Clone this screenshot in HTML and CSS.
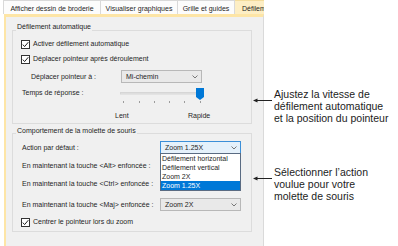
FILE: index.html
```html
<!DOCTYPE html>
<html lang="fr">
<head>
    <meta charset="UTF-8">
    <title>Défilement</title>
    <link rel="stylesheet" href="styles.css">
</head>
<body>
<div class="page">
    <div class="dialog">
        <div class="tabs">
            <div class="tab t1">Afficher dessin de broderie</div>
            <div class="tab t2">Visualiser graphiques</div>
            <div class="tab t3">Grille et guides</div>
            <div class="tab active">Défilem</div>
        </div>
        <div class="panel">
            <!-- auto scroll -->
            <div class="group g1">
                <div class="group-title">Défilement automatique</div>
                <div class="row check c-auto">
                    <svg class="box" width="9" height="9" viewBox="0 0 9 9"><rect x="0.5" y="0.5" width="8" height="8" fill="#fff" stroke="#333"/><path d="M1.8 4.6 L3.6 6.6 L7.3 2.2" fill="none" stroke="#222" stroke-width="1"/></svg>
                    <span>Activer défilement automatique</span>
                </div>
                <div class="row check c-move">
                    <svg class="box" width="9" height="9" viewBox="0 0 9 9"><rect x="0.5" y="0.5" width="8" height="8" fill="#fff" stroke="#333"/><path d="M1.8 4.6 L3.6 6.6 L7.3 2.2" fill="none" stroke="#222" stroke-width="1"/></svg>
                    <span>Déplacer pointeur après déroulement</span>
                </div>
                <div class="row r-target">
                    <label class="lbl">Déplacer pointeur à :</label>
                    <div class="combo">
                        <span>Mi-chemin</span>
                        <svg class="chev" width="6" height="4" viewBox="0 0 6 4"><polyline points="0.5,0.5 3,3 5.5,0.5" fill="none" stroke="#777"/></svg>
                    </div>
                </div>
                <div class="row r-speed">
                    <label class="lbl">Temps de réponse :</label>
                    <svg class="slider" width="88" height="17" viewBox="0 0 88 17">
                        <rect x="0.5" y="5.5" width="82" height="1.5" fill="#e7e7e7" stroke="#d6d6d6" stroke-width="1"/>
                        <g stroke="#9c9c9c" stroke-width="1">
                            <line x1="3.5" y1="14" x2="3.5" y2="16"/>
                            <line x1="19.5" y1="14" x2="19.5" y2="16"/>
                            <line x1="34.5" y1="14" x2="34.5" y2="16"/>
                            <line x1="49.5" y1="14" x2="49.5" y2="16"/>
                            <line x1="64.5" y1="14" x2="64.5" y2="16"/>
                            <line x1="80.5" y1="14" x2="80.5" y2="16"/>
                        </g>
                        <polygon points="76,1 84,1 84,10 80,13 76,10" fill="#0078d7"/>
                    </svg>
                </div>
                <div class="row r-scale">
                    <span class="lent">Lent</span>
                    <span>Rapide</span>
                </div>
            </div>

            <!-- mouse wheel -->
            <div class="group g2">
                <div class="group-title">Comportement de la molette de souris</div>
                <div class="row r-action">
                    <label class="lbl wide">Action par défaut :</label>
                    <div class="combo-wrap">
                        <div class="combo focus">
                            <span>Zoom 1.25X</span>
                            <svg class="chev" width="6" height="4" viewBox="0 0 6 4"><polyline points="0.5,0.5 3,3 5.5,0.5" fill="none" stroke="#777"/></svg>
                        </div>
                        <ul class="list">
                            <li>Défilement horizontal</li>
                            <li>Défilement vertical</li>
                            <li>Zoom 2X</li>
                            <li class="sel">Zoom 1.25X</li>
                        </ul>
                    </div>
                </div>
                <div class="row r-alt">
                    <label class="lbl wide">En maintenant la touche &lt;Alt&gt; enfoncée :</label>
                    <div class="combo"></div>
                </div>
                <div class="row r-ctrl">
                    <label class="lbl wide">En maintenant la touche &lt;Ctrl&gt; enfoncée :</label>
                    <div class="combo"></div>
                </div>
                <div class="row r-maj">
                    <label class="lbl wide">En maintenant la touche &lt;Maj&gt; enfoncée :</label>
                    <div class="combo">
                        <span>Zoom 2X</span>
                        <svg class="chev" width="6" height="4" viewBox="0 0 6 4"><polyline points="0.5,0.5 3,3 5.5,0.5" fill="none" stroke="#777"/></svg>
                    </div>
                </div>
                <div class="row check c-center">
                    <svg class="box" width="9" height="9" viewBox="0 0 9 9"><rect x="0.5" y="0.5" width="8" height="8" fill="#fff" stroke="#333"/><path d="M1.8 4.6 L3.6 6.6 L7.3 2.2" fill="none" stroke="#222" stroke-width="1"/></svg>
                    <span>Centrer le pointeur lors du zoom</span>
                </div>
            </div>
        </div>
    </div>

    <div class="notes">
        <div class="note n1">
            <svg class="arrow" width="19" height="5" viewBox="0 0 19 5"><line x1="3" y1="2.5" x2="19" y2="2.5" stroke="#222" stroke-width="1"/><polygon points="0,2.5 4.5,0.6 4.5,4.4" fill="#222"/></svg>
            <p>Ajustez la vitesse de défilement automatique et la position du pointeur</p>
        </div>
        <div class="note n2">
            <svg class="arrow" width="19" height="5" viewBox="0 0 19 5"><line x1="3" y1="2.5" x2="19" y2="2.5" stroke="#222" stroke-width="1"/><polygon points="0,2.5 4.5,0.6 4.5,4.4" fill="#222"/></svg>
            <p>Sélectionner l’action voulue pour votre molette de souris</p>
        </div>
    </div>
</div>
</body>
</html>
```

FILE: styles.css
```css
body {
    margin: 0;
    background: #fff;
    font-family: "Liberation Sans", Arial, sans-serif;
}

.page {
    display: flex;
    width: 398px;
    height: 246px;
    overflow: hidden;
}

.dialog {
    display: flex;
    flex-direction: column;
    width: 264px;
    height: 246px;
    flex: none;
    overflow: hidden;
    font-size: 7px;
    line-height: 10px;
    color: #1e1e1e;
}

/* tabs */
.tabs {
    display: flex;
    height: 14px;
    padding-left: 3px;
    flex: none;
}

.tab {
    box-sizing: border-box;
    height: 14px;
    line-height: 13px;
    padding-top: 1px;
    background: #fcfcfc;
    border: 1px solid #d9d9d9;
    border-left: none;
    border-bottom: none;
    text-align: center;
    white-space: nowrap;
    flex: none;
}

.t1 { width: 98px; border-left: 1px solid #d9d9d9; }
.t2 { width: 77px; }
.t3 { width: 57px; }

.tab.active {
    width: 29px;
    text-align: left;
    padding-left: 7px;
    background: #fdeec4;
    border-color: #f3dc9c;
    border-right: none;
}

/* panel */
.panel {
    flex: 1;
    margin-left: 4px;
    background: #f0f0f0;
    border-left: 2px solid #fde5a6;
    border-top: 3px solid #fde5a6;
    border-right: 1px solid #dadada;
}

.group {
    border: 1px solid #dcdcdc;
    margin: 0 11px 0 6px;
}

.g1 {
    margin-top: 13px;
    padding-bottom: 2px;
}

.g2 {
    margin-top: 9px;
    padding-bottom: 4px;
}

.group-title {
    width: max-content;
    margin-left: 3px;
    padding: 0 1px;
    background: #f0f0f0;
    height: 10px;
}

.g1 .group-title { margin-top: -9px; }
.g2 .group-title { margin-top: -8px; }

.row {
    display: flex;
    align-items: center;
    padding-left: 9px;
}

.row.check {
    padding-left: 8px;
    height: 10px;
}

.box {
    flex: none;
    margin-right: 3px;
}

.c-auto { margin-top: 7px; }
.c-move { margin-top: 5px; }

.r-target {
    margin-top: 6px;
    padding-left: 18px;
    height: 13px;
}

.lbl {
    width: 90px;
    flex: none;
    white-space: nowrap;
}

.lbl.wide { width: 138px; }

.r-speed {
    margin-top: 4px;
    align-items: flex-start;
    height: 17px;
}

.r-speed .lbl {
    width: 98px;
    margin-top: 1px;
}

.r-scale {
    margin-top: 7px;
    padding-left: 102px;
    height: 10px;
}

.lent {
    width: 73px;
}

/* combos */
.combo {
    box-sizing: border-box;
    display: flex;
    align-items: center;
    justify-content: space-between;
    width: 81px;
    height: 13px;
    padding: 0 3px 0 4px;
    background: #e9e9e9;
    border: 1px solid #b8b8b8;
    white-space: nowrap;
}

.combo.focus {
    background: #e5f1fb;
    border-color: #3c8fd8;
}

.chev { flex: none; }

.combo-wrap {
    position: relative;
}

.list {
    position: absolute;
    top: 12px;
    left: 0;
    z-index: 2;
    box-sizing: border-box;
    width: 81px;
    margin: 0;
    padding: 0;
    list-style: none;
    background: #fff;
    border: 1px solid #5a6b82;
}

.list li {
    height: 9px;
    line-height: 9px;
    padding-left: 1px;
    white-space: nowrap;
}

.list li.sel {
    background: #0078d7;
    color: #fff;
}

.r-action { margin-top: 5px; height: 13px; }
.r-alt { margin-top: 5px; height: 13px; }
.r-ctrl { margin-top: 5px; height: 13px; }
.r-maj { margin-top: 8px; height: 13px; }
.c-center { margin-top: 6px; }

/* annotations */
.notes {
    display: flex;
    flex-direction: column;
    margin-left: -11px;
    flex: 1;
    font-size: 10.5px;
    line-height: 12px;
    color: #1c1c1c;
}

.note {
    display: flex;
    align-items: flex-start;
}

.note p {
    width: 116px;
    margin: 0 0 0 2px;
}

.arrow {
    flex: none;
    margin-top: 10px;
}

.n1 { margin-top: 88px; }
.n2 { margin-top: 42px; }
```
